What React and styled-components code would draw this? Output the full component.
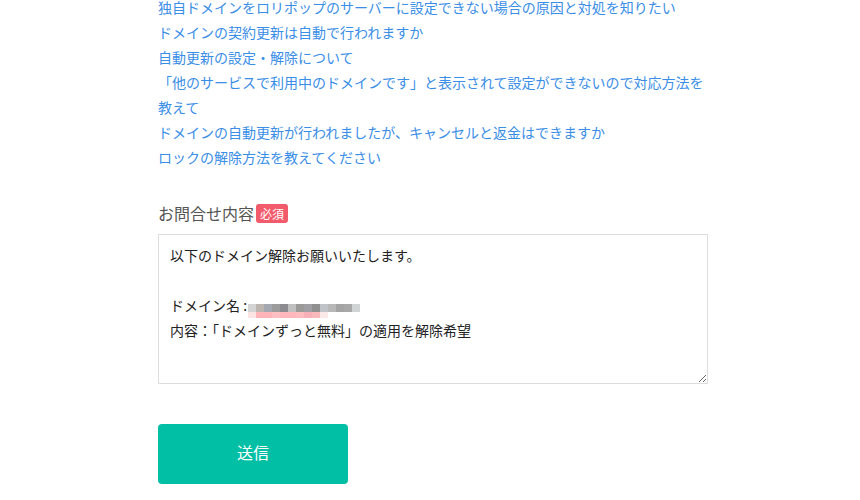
import React from 'react';
import styled, { createGlobalStyle } from 'styled-components';

const GlobalStyle = createGlobalStyle`
  html, body {
    margin: 0;
    padding: 0;
    background: #fff;
  }
  body {
    font-family: 'Noto Sans CJK JP', 'Noto Sans', sans-serif;
    color: #333;
  }
`;

const Page = styled.div`
  width: 550px;
  padding-left: 158px;
  margin-top: -5px;
`;

const FaqList = styled.ul`
  list-style: none;
  margin: 0;
  padding: 0;
  li {
    font-size: 14px;
    line-height: 25px;
  }
  a {
    color: #3a8ee6;
    text-decoration: none;
  }
`;

const FormGroup = styled.div`
  margin-top: 31px;
`;

const Label = styled.div`
  display: flex;
  align-items: center;
  gap: 2px;
  font-size: 16px;
  line-height: 24px;
  color: #555;
  margin-bottom: 9px;
`;

const Required = styled.span`
  display: inline-block;
  background: #f25b6c;
  color: #fff;
  font-size: 12px;
  line-height: 19px;
  padding: 0 4px;
  border-radius: 3px;
`;

const TextBox = styled.div`
  box-sizing: border-box;
  width: 550px;
  height: 150px;
  border: 1px solid #ddd;
  padding: 8px 11px;
  font-size: 14px;
  line-height: 25px;
  color: #222;
  overflow: auto;
  resize: vertical;
  white-space: pre-wrap;
`;

const Mosaic = styled.span`
  display: inline-flex;
  flex-direction: column;
  vertical-align: top;
  margin-top: 11px;
  margin-left: 1px;
`;

const MosaicRow = styled.span`
  display: flex;
  height: ${(p) => p.$h}px;
`;

const Cell = styled.span`
  width: 8px;
  height: 100%;
  background: ${(p) => p.$c};
`;

const SubmitButton = styled.button`
  margin-top: 40px;
  width: 190px;
  height: 60px;
  padding: 0 0 5px;
  border: none;
  border-radius: 4px;
  background: #00bfa5;
  color: #fff;
  font-family: 'Noto Sans CJK JP', 'Noto Sans', sans-serif;
  font-size: 16px;
  cursor: pointer;
`;

const faqs = [
  '独自ドメインをロリポップのサーバーに設定できない場合の原因と対処を知りたい',
  'ドメインの契約更新は自動で行われますか',
  '自動更新の設定・解除について',
  '「他のサービスで利用中のドメインです」と表示されて設定ができないので対応方法を教えて',
  'ドメインの自動更新が行われましたが、キャンセルと返金はできますか',
  'ロックの解除方法を教えてください',
];

const grayRow = [
  '#d4d4d4', '#bcb4ae', '#a4a8b0', '#9c9c9c', '#8c8c90', '#c0c0c0', '#9c9a98',
  '#a0a0a4', '#909090', '#c0c4c8', '#b8b8b8', '#a4a4a4', '#a8a8a8', '#d0d4d4',
];
const pinkRow = [
  '#fce4e4', '#ffb4b8', '#ffb4b8', '#ffc0c4', '#ffb8bc', '#ffb8bc', '#ffbcc0',
  '#f8b0b8', '#f8b8bc', '#fce8e8',
];

const App = () => (
  <>
    <GlobalStyle />
    <Page>
      <FaqList>
        {faqs.map((q) => (
          <li key={q}>
            <a href="#">{q}</a>
          </li>
        ))}
      </FaqList>

      <FormGroup>
        <Label>
          お問合せ内容<Required>必須</Required>
        </Label>
        <TextBox>
          以下のドメイン解除お願いいたします。
          {'\n\n'}
          ドメイン名 :
          <Mosaic>
            <MosaicRow $h={8}>
              {grayRow.map((c, i) => (
                <Cell key={i} $c={c} />
              ))}
            </MosaicRow>
            <MosaicRow $h={6}>
              {pinkRow.map((c, i) => (
                <Cell key={i} $c={c} />
              ))}
            </MosaicRow>
          </Mosaic>
          {'\n'}
          内容：「ドメインずっと無料」の適用を解除希望
        </TextBox>
      </FormGroup>

      <SubmitButton type="button">送信</SubmitButton>
    </Page>
  </>
);

export default App;
